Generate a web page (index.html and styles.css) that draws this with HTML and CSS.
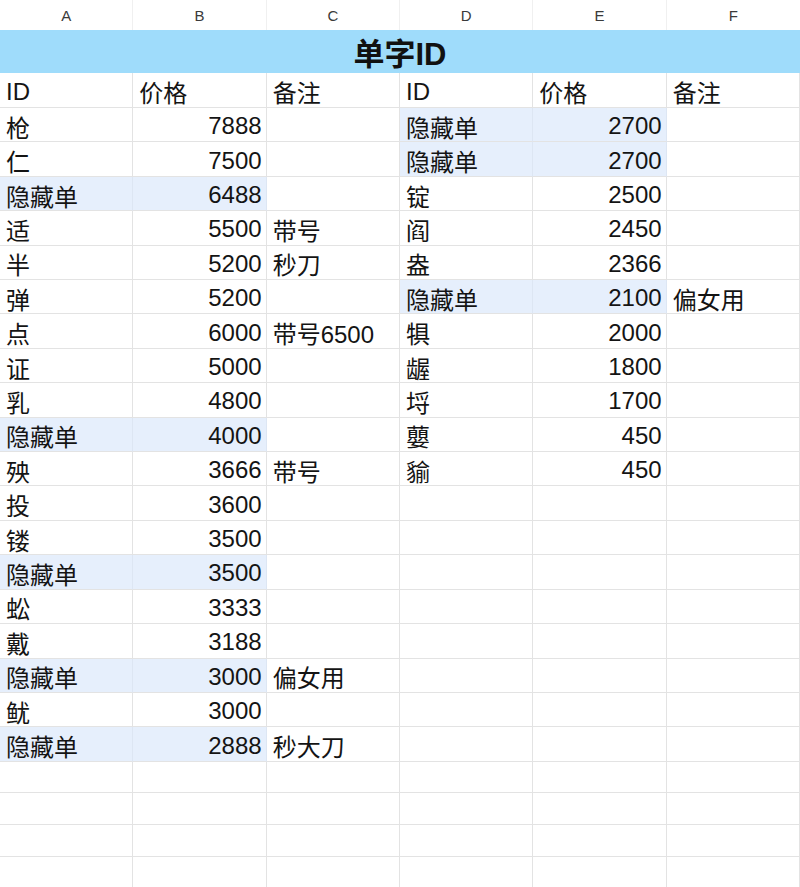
FILE: index.html
```html
<!DOCTYPE html>
<html lang="zh">
<head>
<meta charset="utf-8">
<title>单字ID</title>
<link rel="stylesheet" href="styles.css">
</head>
<body>
<div class="sheet">
  <div class="col">A</div><div class="col">B</div><div class="col">C</div><div class="col">D</div><div class="col">E</div><div class="col">F</div>
  <div class="title">单字ID</div>

  <div class="c">ID</div><div class="c">价格</div><div class="c">备注</div><div class="c">ID</div><div class="c">价格</div><div class="c">备注</div>

  <div class="c">枪</div><div class="c n">7888</div><div class="c"></div><div class="c hl">隐藏单</div><div class="c n hl">2700</div><div class="c"></div>
  <div class="c">仁</div><div class="c n">7500</div><div class="c"></div><div class="c hl">隐藏单</div><div class="c n hl">2700</div><div class="c"></div>
  <div class="c hl">隐藏单</div><div class="c n hl">6488</div><div class="c"></div><div class="c">锭</div><div class="c n">2500</div><div class="c"></div>
  <div class="c">适</div><div class="c n">5500</div><div class="c">带号</div><div class="c">阎</div><div class="c n">2450</div><div class="c"></div>
  <div class="c">半</div><div class="c n">5200</div><div class="c">秒刀</div><div class="c">盎</div><div class="c n">2366</div><div class="c"></div>
  <div class="c">弹</div><div class="c n">5200</div><div class="c"></div><div class="c hl">隐藏单</div><div class="c n hl">2100</div><div class="c">偏女用</div>
  <div class="c">点</div><div class="c n">6000</div><div class="c">带号6500</div><div class="c">犋</div><div class="c n">2000</div><div class="c"></div>
  <div class="c">证</div><div class="c n">5000</div><div class="c"></div><div class="c">龌</div><div class="c n">1800</div><div class="c"></div>
  <div class="c">乳</div><div class="c n">4800</div><div class="c"></div><div class="c">埒</div><div class="c n">1700</div><div class="c"></div>
  <div class="c hl">隐藏单</div><div class="c n hl">4000</div><div class="c"></div><div class="c">蘡</div><div class="c n">450</div><div class="c"></div>
  <div class="c">殃</div><div class="c n">3666</div><div class="c">带号</div><div class="c">貐</div><div class="c n">450</div><div class="c"></div>
  <div class="c">投</div><div class="c n">3600</div><div class="c"></div><div class="c"></div><div class="c"></div><div class="c"></div>
  <div class="c">镂</div><div class="c n">3500</div><div class="c"></div><div class="c"></div><div class="c"></div><div class="c"></div>
  <div class="c hl">隐藏单</div><div class="c n hl">3500</div><div class="c"></div><div class="c"></div><div class="c"></div><div class="c"></div>
  <div class="c">蚣</div><div class="c n">3333</div><div class="c"></div><div class="c"></div><div class="c"></div><div class="c"></div>
  <div class="c">戴</div><div class="c n">3188</div><div class="c"></div><div class="c"></div><div class="c"></div><div class="c"></div>
  <div class="c hl">隐藏单</div><div class="c n hl">3000</div><div class="c">偏女用</div><div class="c"></div><div class="c"></div><div class="c"></div>
  <div class="c">鱿</div><div class="c n">3000</div><div class="c"></div><div class="c"></div><div class="c"></div><div class="c"></div>
  <div class="c hl">隐藏单</div><div class="c n hl">2888</div><div class="c">秒大刀</div><div class="c"></div><div class="c"></div><div class="c"></div>

  <div class="c"></div><div class="c"></div><div class="c"></div><div class="c"></div><div class="c"></div><div class="c"></div>
  <div class="c"></div><div class="c"></div><div class="c"></div><div class="c"></div><div class="c"></div><div class="c"></div>
  <div class="c"></div><div class="c"></div><div class="c"></div><div class="c"></div><div class="c"></div><div class="c"></div>
  <div class="c"></div><div class="c"></div><div class="c"></div><div class="c"></div><div class="c"></div><div class="c"></div>
</div>
</body>
</html>
```
FILE: styles.css
```css
html, body {
  margin: 0;
  padding: 0;
  background: #ffffff;
}
body {
  font-family: "Liberation Sans", "Noto Sans CJK SC", sans-serif;
  color: #141414;
  overflow: hidden;
}
.sheet {
  display: grid;
  grid-template-columns: repeat(6, 1fr);
  grid-template-rows: 30px 43px 35px repeat(19, 34.42px) repeat(4, 31.7px);
  width: 800px;
}
.col {
  display: flex;
  align-items: center;
  justify-content: center;
  font-size: 15px;
  color: #3a3a3a;
  border-right: 1px solid #f0f0f0;
  box-sizing: border-box;
}
.col:nth-child(6) {
  border-right: none;
}
.title {
  grid-column: 1 / 7;
  background: #9fdcfb;
  display: flex;
  align-items: center;
  justify-content: center;
  font-size: 31px;
  font-weight: bold;
  color: #111;
}
.c {
  display: flex;
  align-items: center;
  font-size: 24px;
  padding: 3px 6px 0;
  border-right: 1px solid #e3e3e3;
  border-bottom: 1px solid #e3e3e3;
  box-sizing: border-box;
  white-space: nowrap;
  overflow: hidden;
}
.c.n {
  justify-content: flex-end;
  padding-right: 4px;
}
.c.hl {
  background: #e6effc;
  border-right-color: #dde6f3;
}
```
